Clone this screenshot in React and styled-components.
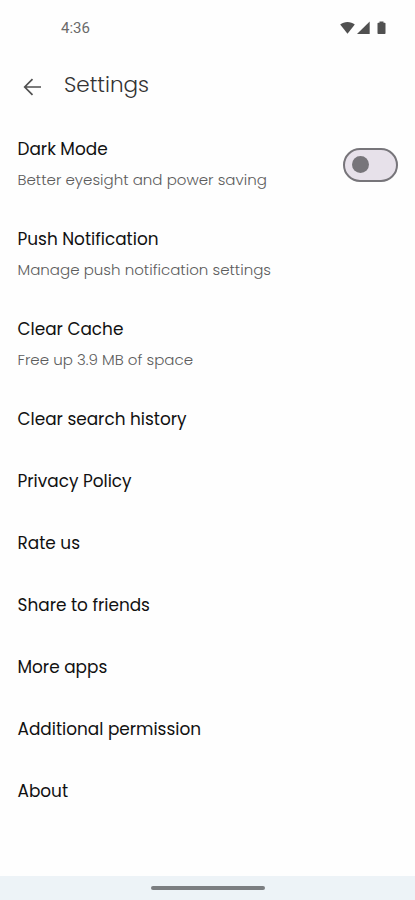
import React, { useState } from "react";
import styled, { createGlobalStyle } from "styled-components";

const GlobalStyle = createGlobalStyle`
* {
    box-sizing: border-box;
}
body {
    margin: 0;
    background-color: #fefefe;
    font-family: Poppins, Inter, sans-serif;
}`

const Screen = styled.div`
display: flex;
flex-direction: column;
width: 100%;
height: 100vh;
overflow: hidden;`

const StatusBar = styled.div`
display: flex;
align-items: center;
justify-content: space-between;
height: 55px;
padding: 1px 28px 0 61px;`

const Clock = styled.span`
font-family: Roboto, sans-serif;
font-size: 15px;
color: #6a6a6a;`

const TopBar = styled.header`
display: flex;
align-items: center;
height: 64px;
padding: 0 23px 5px;
gap: 22px;`

const BackButton = styled.button`
display: flex;
padding: 5px 0 0;
border: none;
background: none;
color: #505050;`

const Title = styled.h1`
margin: 0;
font-size: 21.5px;
font-weight: 300;
line-height: 30px;
color: #333333;`

const List = styled.main`
flex: 1;`

const Row = styled.div`
display: flex;
align-items: center;
justify-content: space-between;
padding: 18px 17px 20px 17.5px;`

const Texts = styled.div`
display: flex;
flex-direction: column;
gap: 9px;
white-space: nowrap;`

const Name = styled.span`
font-size: 16.9px;
line-height: 24px;
color: #111111;`

const Detail = styled.span`
font-size: 15.05px;
font-weight: 300;
line-height: 19px;
color: #5c5c5c;`

const Switch = styled.button`
display: flex;
align-items: center;
justify-content: ${props => props.$on ? "flex-end" : "flex-start"};
width: 55px;
height: 34px;
margin: 3px 0 0;
padding: 0 7px;
border: 2px solid #77757a;
border-radius: 17px;
background-color: #e7e1ea;`

const Thumb = styled.span`
width: 17px;
height: 17px;
border-radius: 50%;
background-color: #77757a;`

const NavBar = styled.footer`
display: flex;
justify-content: center;
height: 24px;
padding-top: 10px;
background-color: #edf3f7;`

const Handle = styled.div`
width: 114px;
height: 4px;
border-radius: 2px;
background-color: #7b7e81;`

const items = [
    { name: "Dark Mode", detail: "Better eyesight and power saving", toggle: true },
    { name: "Push Notification", detail: "Manage push notification settings" },
    { name: "Clear Cache", detail: "Free up 3.9 MB of space" },
    { name: "Clear search history" },
    { name: "Privacy Policy" },
    { name: "Rate us" },
    { name: "Share to friends" },
    { name: "More apps" },
    { name: "Additional permission" },
    { name: "About" },
];

function StatusIcons()
{
    return (
        <svg width="48" height="16" viewBox="0 0 48 16" fill="#505050">
            <path d="M1.2 4.6C5 1 12 1 15.8 4.6L8.5 13.8Z" />
            <path d="M30.7 1.5V14H18Z" />
            <path d="M40.5 1.5h4v1.3h1.2q.8 0 .8.8v9.6q0 .8-.8.8h-6.4q-.8 0-.8-.8V3.6q0-.8.8-.8h1.2z" />
        </svg>
    );
}

export default function App()
{
    const [darkMode, setDarkMode] = useState(false);

    return (
        <Screen>
            <GlobalStyle />
            <StatusBar>
                <Clock>4:36</Clock>
                <StatusIcons />
            </StatusBar>

            <TopBar>
                <BackButton aria-label="Back">
                    <svg width="19" height="18" viewBox="0 0 19 18" fill="none" stroke="currentColor" strokeWidth="1.7">
                        <path d="M18 9H2M9.5 1.2L1.7 9l7.8 7.8" />
                    </svg>
                </BackButton>
                <Title>Settings</Title>
            </TopBar>

            <List>
                {items.map(item => (
                    <Row key={item.name}>
                        <Texts>
                            <Name>{item.name}</Name>
                            {item.detail && <Detail>{item.detail}</Detail>}
                        </Texts>
                        {item.toggle && (
                            <Switch role="switch" aria-label={item.name} aria-checked={darkMode} $on={darkMode} onClick={() => setDarkMode(!darkMode)}>
                                <Thumb />
                            </Switch>
                        )}
                    </Row>
                ))}
            </List>

            <NavBar>
                <Handle />
            </NavBar>
        </Screen>
    );
}
